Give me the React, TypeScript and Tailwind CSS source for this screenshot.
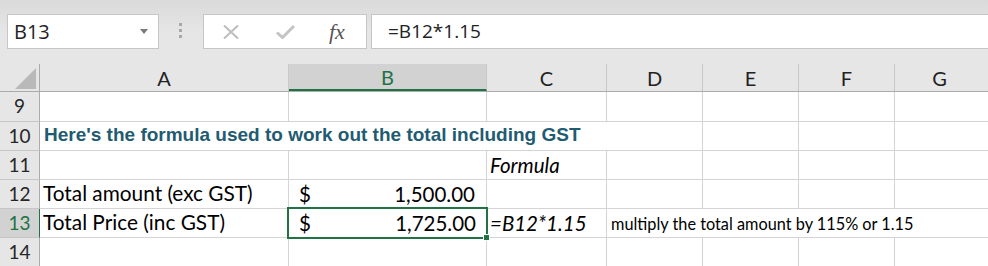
import React from 'react';

const cellFont = { fontFamily: 'Lato, "Open Sans", sans-serif' };

// column widths incl. right gridline: row header, A..F, G takes the rest
const COLS = ['w-[40px]', 'w-[249px]', 'w-[198px]', 'w-[120px]', 'w-[96px]', 'w-[96px]', 'w-[96px]'];

const Cell = ({
  w,
  children,
  className = '',
}: {
  w: string;
  children?: React.ReactNode;
  className?: string;
}) => (
  <div className={`${w} shrink-0 h-full border-r border-[#d4d4d4] flex items-end pb-[2px] leading-none ${className}`}>
    {children}
  </div>
);

const RowHead = ({ n, active = false }: { n: number; active?: boolean }) => (
  <div
    className={`w-[40px] shrink-0 h-full flex items-center justify-center text-[19px] border-b border-r ${
      active ? 'bg-[#d2d2d2] border-r-[#217346] border-b-[#c6c6c6] text-[#217346]' : 'bg-[#e6e6e6] border-r-[#ababab] border-b-[#c6c6c6] text-[#262626]'
    }`}
  >
    {n}
  </div>
);

const Row = ({ n, h = 'h-[29px]', active, children }: { n: number; h?: string; active?: boolean; children?: React.ReactNode }) => (
  <div className={`flex ${h}`}>
    <RowHead n={n} active={active} />
    <div className="flex flex-1 border-b border-[#d4d4d4] h-full">{children}</div>
  </div>
);

const Empty = () => (
  <>
    {COLS.slice(1).map((w, i) => (
      <Cell key={i} w={w} />
    ))}
    <div className="flex-1" />
  </>
);

export default function App() {
  return (
    <div className="w-[988px] h-[266px] overflow-hidden bg-white text-black" style={cellFont}>
      {/* formula bar */}
      <div className="h-[64px] bg-gradient-to-b from-[#dadada] via-[#e6e6e6] to-[#e6e6e6] flex items-start pt-[14px]">
        <div
          className="ml-[7px] w-[152px] h-[35px] bg-white border border-[#c6c6c6] flex items-center justify-between pl-[6px] pr-[10px] text-[20px] text-[#222]"
          style={{ fontFamily: '"Open Sans", sans-serif' }}
        >
          <span>B13</span>
          <svg width="8" height="5" viewBox="0 0 8 5">
            <path d="M0 0h8L4 5z" fill="#7a7a7a" />
          </svg>
        </div>
        <div className="ml-[20px] w-[3px] mt-[9px] flex flex-col gap-[3px]">
          <span className="w-[3px] h-[3px] bg-[#a8a8a8]" />
          <span className="w-[3px] h-[3px] bg-[#a8a8a8]" />
          <span className="w-[3px] h-[3px] bg-[#a8a8a8]" />
        </div>
        <div className="ml-[21px] w-[164px] h-[35px] bg-white border border-[#c6c6c6] flex items-center">
          <svg className="ml-[18px]" width="18" height="14" viewBox="0 0 18 14">
            <path d="M2 0.5L16 13.5M16 0.5L2 13.5" stroke="#bdbdbd" strokeWidth="2" />
          </svg>
          <svg className="ml-[36px]" width="19" height="14" viewBox="0 0 19 14">
            <path d="M1 7.5l5.5 5L18 1" stroke="#c4c4c4" strokeWidth="3" fill="none" />
          </svg>
          <span
            className="ml-[34px] text-[22px] italic text-[#555] leading-none"
            style={{ fontFamily: '"Liberation Serif", serif' }}
          >
            fx
          </span>
        </div>
        <div
          className="ml-[4px] flex-1 mr-[-4px] h-[35px] bg-white border border-[#c6c6c6] flex items-center pl-[16px] text-[19px] text-[#222]"
          style={{ fontFamily: '"Open Sans", sans-serif' }}
        >
          =B12*1.15
        </div>
      </div>

      {/* column headers */}
      <div className="flex h-[28px] bg-[#e6e6e6] border-b border-[#ababab] text-[20px] text-[#222]">
        <div className="w-[40px] shrink-0 border-r border-[#ababab] relative">
          <svg className="absolute left-[15px] top-[4px]" width="21" height="21" viewBox="0 0 21 21">
            <path d="M21 0V21H0z" fill="#b9b9b9" />
          </svg>
        </div>
        <div className="w-[249px] shrink-0 border-r border-[#c8c8c8] flex items-center justify-center">A</div>
        <div className="w-[198px] shrink-0 border-r border-[#c8c8c8] bg-[#d2d2d2] border-b-2 border-b-[#217346] flex items-center justify-center text-[#217346]">
          B
        </div>
        <div className="w-[120px] shrink-0 border-r border-[#c8c8c8] flex items-center justify-center">C</div>
        <div className="w-[96px] shrink-0 border-r border-[#c8c8c8] flex items-center justify-center">D</div>
        <div className="w-[96px] shrink-0 border-r border-[#c8c8c8] flex items-center justify-center">E</div>
        <div className="w-[96px] shrink-0 border-r border-[#c8c8c8] flex items-center justify-center">F</div>
        <div className="flex-1 flex items-center justify-center pr-[4px]">G</div>
      </div>

      <Row n={9} h="h-[30px]">
        <Empty />
      </Row>

      <Row n={10}>
        <div className="w-[663px] shrink-0 h-full border-r border-[#d4d4d4] flex items-end pb-[6px] pl-[4px]">
          <span
            className="text-[19px] font-bold text-[#1f5b72] whitespace-nowrap leading-none"
            style={{ fontFamily: '"Liberation Sans", Arial, sans-serif' }}
          >
            Here's the formula used to work out the total including GST
          </span>
        </div>
        <Cell w="w-[96px]" />
        <Cell w="w-[96px]" />
        <div className="flex-1" />
      </Row>

      <Row n={11}>
        <Cell w="w-[249px]" />
        <Cell w="w-[198px]" />
        <Cell w="w-[120px]" className="pl-[3px] pb-[4px] italic text-[20.5px]">
          Formula
        </Cell>
        <Cell w="w-[96px]" />
        <Cell w="w-[96px]" />
        <Cell w="w-[96px]" />
        <div className="flex-1" />
      </Row>

      <Row n={12}>
        <Cell w="w-[249px]" className="pl-[3px] pb-[4px] text-[20.8px]">
          Total amount (exc GST)
        </Cell>
        <Cell w="w-[198px]" className="pl-[10px] pr-[11px] pb-[4px] justify-between text-[20.5px]">
          <span>$</span>
          <span>1,500.00</span>
        </Cell>
        <Cell w="w-[120px]" />
        <Cell w="w-[96px]" />
        <Cell w="w-[96px]" />
        <Cell w="w-[96px]" />
        <div className="flex-1" />
      </Row>

      <Row n={13} active>
        <Cell w="w-[249px]" className="pl-[3px] pb-[4px] text-[20.8px]">
          Total Price (inc GST)
        </Cell>
        <div className="w-[198px] shrink-0 h-full relative">
          <div className="absolute left-[-2px] top-[-2px] right-[-1px] bottom-[-2px] border-2 border-[#217346] flex items-end justify-between pl-[10px] pr-[10px] pb-[4px] leading-none text-[20.5px]">
            <span>$</span>
            <span>1,725.00</span>
            <span className="absolute right-[-4px] bottom-[-4px] w-[7px] h-[7px] bg-[#217346] border border-white" />
          </div>
        </div>
        <Cell w="w-[120px]" className="pl-[3px] pb-[4px] italic text-[20.5px]">
          =B12*1.15
        </Cell>
        <div className="flex-1 h-full flex items-end pb-[5px] pl-[4px] text-[16.3px] leading-none whitespace-nowrap">
          multiply the total amount by 115% or 1.15
        </div>
      </Row>

      <Row n={14}>
        <Empty />
      </Row>
    </div>
  );
}
